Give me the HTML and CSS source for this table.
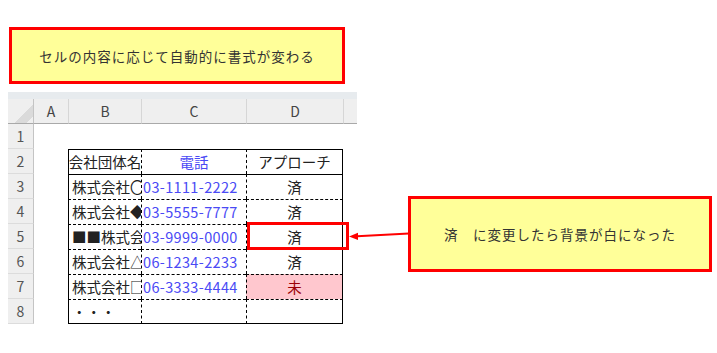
FILE: index.html
```html
<!DOCTYPE html>
<html lang="ja">
<head>
<meta charset="utf-8">
<title>条件付き書式</title>
<link rel="stylesheet" href="styles.css">
</head>
<body>
<div class="page">
  <div class="note note-top">セルの内容に応じて自動的に書式が変わる</div>

  <div class="sheet">
    <div class="strip"></div>

    <div class="hd corner"></div>
    <div class="hd first">A</div>
    <div class="hd">B</div>
    <div class="hd">C</div>
    <div class="hd">D</div>
    <div class="hd"></div>

    <div class="rn">1</div>
    <div class="blank"></div><div class="blank"></div><div class="blank"></div><div class="blank"></div><div class="blank"></div>

    <div class="rn">2</div>
    <div class="blank"></div>
    <div class="t b solid center">会社団体名</div>
    <div class="t c solid center">電話</div>
    <div class="t d solid">アプローチ</div>
    <div class="blank"></div>

    <div class="rn">3</div>
    <div class="blank"></div>
    <div class="t b solid">株式会社〇〇</div>
    <div class="t c solid">03-1111-2222</div>
    <div class="t d solid">済</div>
    <div class="blank"></div>

    <div class="rn">4</div>
    <div class="blank"></div>
    <div class="t b">株式会社◆◆</div>
    <div class="t c">03-5555-7777</div>
    <div class="t d">済</div>
    <div class="blank"></div>

    <div class="rn">5</div>
    <div class="blank"></div>
    <div class="t b">■■株式会社</div>
    <div class="t c">03-9999-0000</div>
    <div class="t d">済</div>
    <div class="blank"></div>

    <div class="rn">6</div>
    <div class="blank"></div>
    <div class="t b">株式会社△△</div>
    <div class="t c">06-1234-2233</div>
    <div class="t d">済</div>
    <div class="blank"></div>

    <div class="rn">7</div>
    <div class="blank"></div>
    <div class="t b">株式会社□□</div>
    <div class="t c">06-3333-4444</div>
    <div class="t d bad">未</div>
    <div class="blank"></div>

    <div class="rn">8</div>
    <div class="blank"></div>
    <div class="t b last">・・・</div>
    <div class="t c last"></div>
    <div class="t d last"></div>
    <div class="blank"></div>
  </div>

  <div class="mark"></div>
  <svg class="arrow" width="66" height="20" viewBox="0 0 66 20">
    <line x1="64" y1="7.5" x2="12" y2="10.3" stroke="#ff0000" stroke-width="2"/>
    <polygon points="4,10.5 13,6.7 13,14" fill="#ff0000"/>
  </svg>
  <div class="note note-side">済　に変更したら背景が白になった</div>
</div>
</body>
</html>
```

FILE: styles.css
```css
* {
  box-sizing: border-box;
}

body {
  margin: 0;
  background: #ffffff;
  font-family: "Noto Sans CJK JP", "Noto Sans", sans-serif;
  color: #222222;
}

.page {
  position: relative;
  width: 717px;
  height: 353px;
  overflow: hidden;
}

/* yellow callouts with red frame */
.note {
  display: flex;
  align-items: center;
  justify-content: center;
  background: #ffff99;
  border: 3px solid #ff0000;
  color: #333333;
  font-size: 13.5px;
  letter-spacing: 1px;
  white-space: nowrap;
}

.note-top {
  margin: 27px 0 0 9px;
  width: 336px;
  height: 57px;
}

.note-side {
  position: absolute;
  left: 408px;
  top: 196px;
  width: 304px;
  height: 76px;
}

/* spreadsheet */
.sheet {
  margin: 8px 0 0 8px;
  display: grid;
  grid-template-columns: 26px 34px 73px 105px 97px 14px;
  grid-template-rows: 7px 25px repeat(8, 25px);
  width: 349px;
}

.strip {
  grid-column: 1 / -1;
  background: #e7ebee;
}

.hd {
  display: flex;
  align-items: center;
  justify-content: center;
  background: #efefef;
  border-left: 1px solid #d6d6d6;
  border-bottom: 1px solid #a9a9a9;
  color: #444444;
  font-size: 14px;
}

.hd.first {
  border-left: none;
}

.corner {
  border-left: none;
  border-right: 1px solid #c4c4c4;
  background:
    linear-gradient(135deg, transparent 0 62%, #dadada 62% 86%, transparent 86%),
    #efefef;
}

.rn {
  display: flex;
  align-items: center;
  justify-content: center;
  background: #efefef;
  border-right: 1px solid #c4c4c4;
  border-bottom: 1px solid #dcdcdc;
  color: #555555;
  font-size: 14px;
}

.blank {
  background: #ffffff;
}

/* bordered table cells */
.t {
  display: flex;
  align-items: center;
  overflow: hidden;
  white-space: nowrap;
  padding-bottom: 1px;
  border-top: 1px dashed #000000;
  border-left: 1px dashed #000000;
  font-size: 14.5px;
  color: #222222;
}

.t.solid {
  border-top-style: solid;
}

.t.b {
  border-left-style: solid;
  padding-left: 3px;
}

.t.c {
  color: #4a4af5;
  padding-left: 1px;
  letter-spacing: 0.35px;
}

.t.d {
  justify-content: center;
  border-right: 1px solid #000000;
}

.t.center {
  justify-content: center;
  padding-left: 0;
  letter-spacing: 0;
}

.t.last {
  border-bottom: 1px solid #000000;
}

.t.bad {
  background: #ffc7ce;
  color: #9c0006;
}

/* highlight frame and pointer */
.mark {
  position: absolute;
  left: 247px;
  top: 222px;
  width: 102px;
  height: 28px;
  border: 3px solid #ff0000;
}

.arrow {
  position: absolute;
  left: 345px;
  top: 226px;
}
```
